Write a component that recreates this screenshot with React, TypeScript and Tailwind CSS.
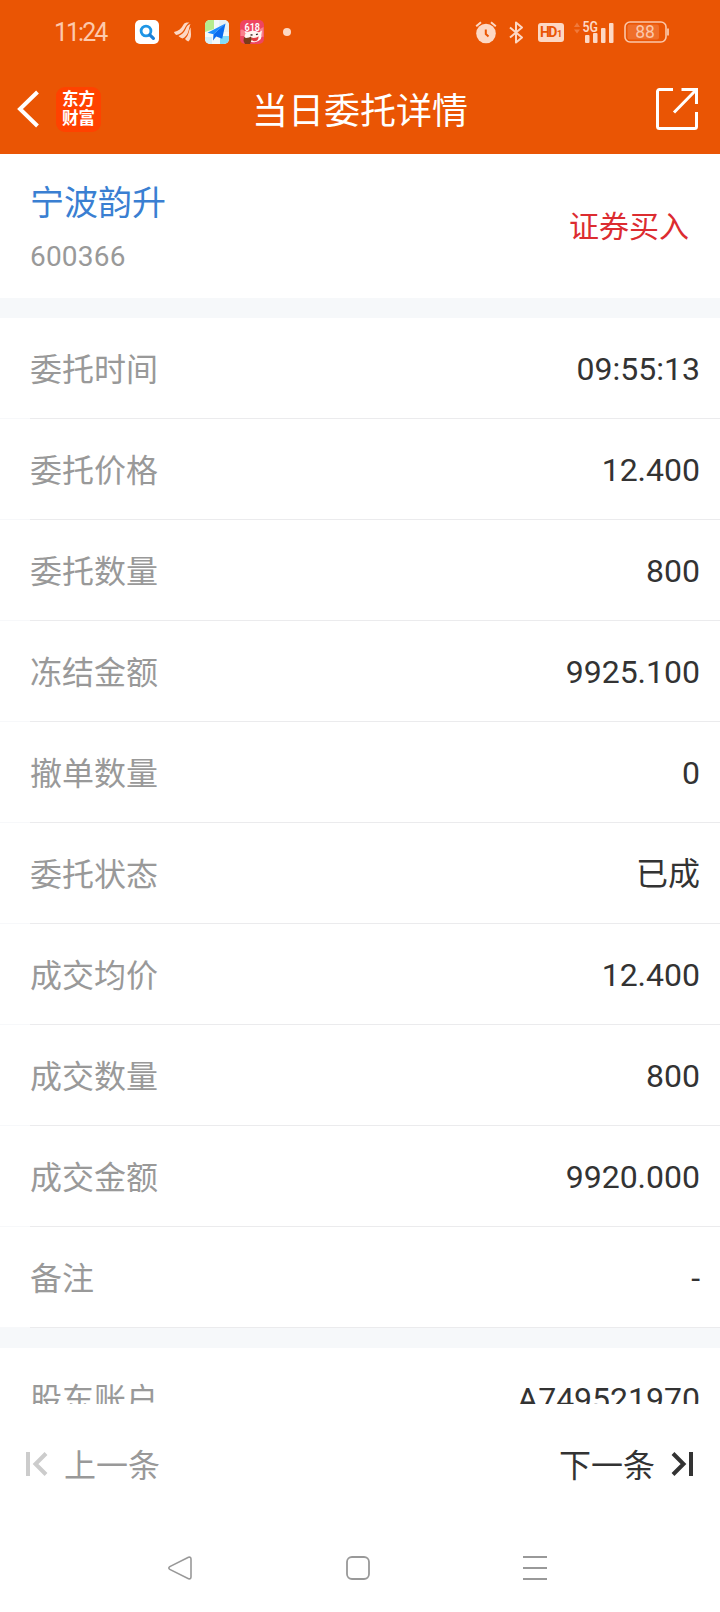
import type { ReactNode } from "react";

interface DetailRow {
  label: string;
  value: string;
}

const rows: DetailRow[] = [
  { label: "委托时间", value: "09:55:13" },
  { label: "委托价格", value: "12.400" },
  { label: "委托数量", value: "800" },
  { label: "冻结金额", value: "9925.100" },
  { label: "撤单数量", value: "0" },
  { label: "委托状态", value: "已成" },
  { label: "成交均价", value: "12.400" },
  { label: "成交数量", value: "800" },
  { label: "成交金额", value: "9920.000" },
  { label: "备注", value: "-" },
];

const SearchAppIcon = () => (
  <svg className="w-6 h-6" viewBox="0 0 24 24" fill="none">
    <rect width="24" height="24" rx="5" fill="#fff" />
    <circle cx="11" cy="11" r="4.9" stroke="#1e96e6" strokeWidth="2.8" />
    <path d="M14.8 14.8l3.6 3.6" stroke="#1b7fd6" strokeWidth="3.2" strokeLinecap="round" />
  </svg>
);

const FeatherIcon = () => (
  <svg className="w-[17px] h-5" viewBox="0 0 17 20" fill="#fdd8c4">
    <path d="M0 10C4.500 9 7.500 6.500 9.500 2.500C10.500 0.800 12 0.300 15.500 0.500C12.800 2 12 4 10.500 6.800C8.500 10.500 6 12.300 2.500 13C1.200 12.300 0.500 11.300 0 10Z" />
    <path d="M4.500 14C8 12.800 10.200 10.300 11.800 6.800C12.800 4.300 13.800 2.800 16.500 2C15.300 4.300 15.300 6.500 14.300 9.500C13.200 13 11.300 15.300 8.500 16.500C7 16 5.500 15.200 4.500 14Z" />
    <path d="M11 17C13.200 14.800 14.200 12.800 14.900 9.800C15.200 8 15.800 6.800 16.800 5.500C16.500 8 17 10 17 12.500C17 15.500 16 18 14.300 19.500C13 19 12 18.200 11 17Z" />
  </svg>
);

const MapAppIcon = () => (
  <svg className="w-6 h-6" viewBox="0 0 24 24">
    <defs>
      <clipPath id="map-tile">
        <rect width="24" height="24" rx="5" />
      </clipPath>
    </defs>
    <g clipPath="url(#map-tile)">
      <rect width="24" height="24" fill="#f2f8fa" />
      <path d="M0 0h9v9L0 12z" fill="#b5ec8f" />
      <path d="M14 0h10v12h-10z" fill="#e8f1f5" />
      <path d="M15 16h9v8h-9z" fill="#83dcf8" />
      <path d="M0 17h7v7H0z" fill="#d5effa" />
      <path d="M20.500 3.500L2.500 12.700l6 1.600z" fill="#1a8cff" />
      <path d="M20.500 3.500L8.500 14.300l-.5 6.200 3.200-4 6 2.300z" fill="#0a6cf0" />
    </g>
  </svg>
);

const SaleAppIcon = () => (
  <svg className="w-6 h-6" viewBox="0 0 24 24">
    <rect width="24" height="24" rx="5" fill="#ee4560" />
    <path d="M0.500 10c2-1 3.500 0 4.500 2v4H.5zM20 9l3.500-2v10l-3.500-1z" fill="#f9808c" />
    <ellipse cx="13" cy="16.500" rx="8.500" ry="5.800" fill="#fff4f1" />
    <path d="M5.500 14l-1-3 4.500 1zM18 13l4-2.500-.8 5z" fill="#fff4f1" />
    <text
      x="4.500"
      y="10.800"
      textLength="15.500"
      lengthAdjust="spacingAndGlyphs"
      fontSize="11.500"
      fontWeight="600"
      fill="#fff"
      fontFamily="Roboto, sans-serif"
    >
      618
    </text>
    <path d="M11 17.500c3 .8 5.500.4 7.500-1.200 .3 3.200-1.500 5-3.800 5s-3.400-1.500-3.700-3.800z" fill="#e23a40" />
    <path d="M10.500 14.800l2 .2M16 14.600l2-.6" stroke="#33201f" strokeWidth="1.300" />
    <path d="M4 17l2 1 3-.5 2-1 .8 3-1.800 4.500H5L3.500 21z" fill="#793b19" />
  </svg>
);

const AlarmIcon = () => (
  <svg className="w-[22px] h-[23px]" viewBox="0 0 22 23" fill="none">
    <circle cx="11" cy="12.500" r="9.800" fill="#fdd8c4" />
    <path d="M1.200 5.200L6 1.200M20.800 5.200L16 1.200" stroke="#fdd8c4" strokeWidth="2" />
    <path d="M10.800 8.500v4.500l2.700 2.500" stroke="#ea5504" strokeWidth="2" />
  </svg>
);

const BluetoothIcon = () => (
  <svg className="w-[15px] h-[23px]" viewBox="0 0 15 23" fill="none" stroke="#fdd8c4" strokeWidth="2">
    <path d="M1 6.500l12 10-6 5V1.500l6 5-12 10" strokeLinejoin="round" />
  </svg>
);

const HdIcon = () => (
  <div className="flex h-[19px] w-[26px] items-baseline justify-center rounded-[3px] bg-[#fdd8c4] font-bold leading-[19px] text-[#ea5504]">
    <span className="text-[14px] tracking-[-1.5px]">HD</span>
    <span className="ml-px text-[9px]">1</span>
  </div>
);

const SignalIcon = () => (
  <svg className="w-10 h-[23px] overflow-visible" viewBox="0 0 40 23">
    <path d="M0 6l3-4.500L6 6zM0 8.500l3 4 3-4z" fill="#f07a3c" />
    <text
      x="8.500"
      y="11"
      fontSize="14"
      fontWeight="600"
      textLength="15.500"
      lengthAdjust="spacingAndGlyphs"
      fill="#fdd8c4"
      fontFamily="Roboto, sans-serif"
    >
      5G
    </text>
    <g fill="#fdd8c4">
      <rect x="11" y="14" width="4.500" height="8" rx="1" />
      <rect x="19" y="12" width="4.500" height="10" rx="1" />
      <rect x="27" y="7" width="4.500" height="15" rx="1" />
      <rect x="35" y="2" width="4.500" height="20" rx="1" />
    </g>
  </svg>
);

const BatteryIcon = () => (
  <svg className="w-[45px] h-[22px]" viewBox="0 0 45 22">
    <rect x="3.500" y="3.500" width="31.500" height="15" rx="2" fill="#ef6f2b" />
    <rect x="1" y="1" width="41" height="20" rx="5" fill="none" stroke="#fbc6a9" strokeWidth="1.600" />
    <path d="M44 7.500v7" stroke="#fbc6a9" strokeWidth="1.800" />
    <text
      x="21"
      y="17"
      fontSize="17.500"
      textAnchor="middle"
      fill="#fbc6a9"
      fontFamily="Roboto, sans-serif"
    >
      88
    </text>
  </svg>
);

const ShareIcon = () => (
  <svg className="w-[42px] h-[42px]" viewBox="0 0 42 42" fill="none" stroke="#fff" strokeWidth="3">
    <path d="M17 1.500H3.500a2 2 0 0 0-2 2v35a2 2 0 0 0 2 2h35a2 2 0 0 0 2-2V24" />
    <path d="M25.500 1.500h15V16M40 2L18 24.500" />
  </svg>
);

function StatusBar() {
  return (
    <div className="flex h-16 items-center justify-between pl-[54px] pr-[51px]">
      <div className="flex items-center">
        <span className="w-[81px] pt-px text-[25px] leading-none tracking-[-2px] text-[#fdc9ac]">11:24</span>
        <SearchAppIcon />
        <div className="ml-[15px] mr-[14px]">
          <FeatherIcon />
        </div>
        <MapAppIcon />
        <div className="ml-[11px] mr-[19px]">
          <SaleAppIcon />
        </div>
        <span className="size-2 rounded-full bg-[#fdd8c4]" />
      </div>
      <div className="flex items-center">
        <AlarmIcon />
        <div className="ml-3 mr-3.5">
          <BluetoothIcon />
        </div>
        <HdIcon />
        <div className="ml-2.5 mr-2.5">
          <SignalIcon />
        </div>
        <BatteryIcon />
      </div>
    </div>
  );
}

function NavBar() {
  return (
    <div className="flex h-[90px] items-center justify-between pl-[17px] pr-[22px]">
      <div className="flex w-[84px] items-center gap-[17px]">
        <svg className="h-[38px] w-[22px]" viewBox="0 0 22 38" fill="none" stroke="#fff" strokeWidth="4">
          <path d="M20.500 2L3 19l17.500 17" />
        </svg>
        <div className="flex size-[45px] flex-col items-center justify-center rounded-[9px] bg-[#ff4200] text-[16.5px] font-bold leading-[19px] text-white">
          <span>东方</span>
          <span>财富</span>
        </div>
      </div>
      <h1 className="pt-[5px] text-[36px] leading-none text-white">当日委托详情</h1>
      <div className="flex w-[79px] justify-end">
        <ShareIcon />
      </div>
    </div>
  );
}

function Row({ label, children }: { label: string; children: ReactNode }) {
  return (
    <div className="flex h-[100px] items-center justify-between pl-[30px] pr-5 pt-[2px] text-[32px] leading-none">
      <span className="pt-px text-[#999999]">{label}</span>
      <span className="text-[#333333]">{children}</span>
    </div>
  );
}

export default function App() {
  return (
    <div className="flex h-[1612px] w-[720px] flex-col overflow-hidden bg-white font-['Roboto','Noto_Sans_CJK_SC',sans-serif]">
      <header className="h-[154px] shrink-0 bg-[#ea5504]">
        <StatusBar />
        <NavBar />
      </header>

      <main className="h-[1250px] shrink-0 overflow-hidden">
        {/* Stock */}
        <section className="flex h-36 items-center justify-between pl-[30px] pr-[31px] pt-[2px]">
          <div>
            <div className="text-[34px] leading-[50px] text-[#3a7fd2]">宁波韵升</div>
            <div className="mt-[9px] text-[28px] leading-[40px] tracking-[0.2px] text-[#999999]">600366</div>
          </div>
          <span className="text-[30px] leading-none text-[#dc2c30]">证券买入</span>
        </section>
        <div className="h-5 bg-[#f6f8fa]" />

        {/* Order details */}
        {rows.map((row) => (
          <div key={row.label}>
            <Row label={row.label}>{row.value}</Row>
            <div className="flex h-px bg-[#f7f8fa]">
              <div className="ml-[30px] flex-1 bg-[#ebebed]" />
            </div>
          </div>
        ))}
        <div className="h-5 bg-[#f6f8fa]" />
        <Row label="股东账户">A749521970</Row>
      </main>

      <footer className="flex h-[122px] shrink-0 items-center justify-between px-[25px] pb-[2px] text-[32px] leading-none">
        <button className="flex items-center gap-[15px] text-[#999999]">
          <svg className="h-6 w-6" viewBox="0 0 24 24" fill="none" stroke="#cccccc" strokeWidth="4">
            <path d="M3 0v24M21 1.500L10.500 12 21 22.500" />
          </svg>
          <span className="pt-[3px]">上一条</span>
        </button>
        <button className="flex items-center gap-4 text-[#333333]">
          <span className="pt-[3px]">下一条</span>
          <svg className="h-6 w-6" viewBox="0 0 24 24" fill="none" stroke="#333333" strokeWidth="4">
            <path d="M20 0v24M2 1.500L12.500 12 2 22.500" />
          </svg>
        </button>
      </footer>

      {/* System navigation */}
      <nav className="flex flex-1 items-center justify-between pb-[2px] pl-[168px] pr-[173px]">
        <svg className="h-6 w-6" viewBox="0 0 24 24" fill="none" stroke="#999999" strokeWidth="1.600">
          <path d="M20.500 1.200L1.800 10.600q-2 1.400 0 2.800L20.500 22.800q2.500.6 2.500-2V3.200q0-2.600-2.500-2z" />
        </svg>
        <svg className="h-6 w-6" viewBox="0 0 24 24" fill="none" stroke="#999999" strokeWidth="1.800">
          <rect x="1" y="1" width="22" height="22" rx="5" />
        </svg>
        <svg className="h-6 w-6" viewBox="0 0 24 24" stroke="#999999" strokeWidth="1.800">
          <path d="M0 1h24M0 12h24M0 23h24" />
        </svg>
      </nav>
    </div>
  );
}
